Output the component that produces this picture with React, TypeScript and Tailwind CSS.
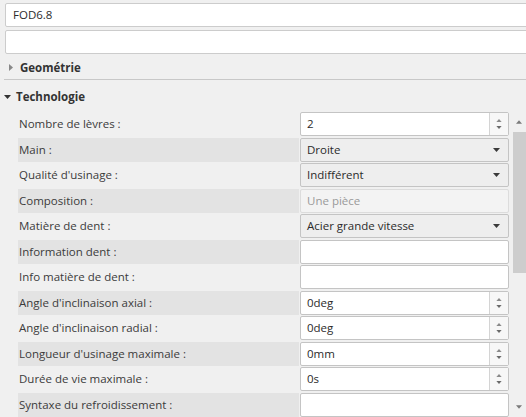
import React from "react";

type Row = {
  label: string;
  kind: "spin" | "combo" | "text" | "disabled";
  value?: string;
};

const ROWS: Row[] = [
  { label: "Nombre de lèvres :", kind: "spin", value: "2" },
  { label: "Main :", kind: "combo", value: "Droite" },
  { label: "Qualité d'usinage :", kind: "combo", value: "Indifférent" },
  { label: "Composition :", kind: "disabled", value: "Une pièce" },
  { label: "Matière de dent :", kind: "combo", value: "Acier grande vitesse" },
  { label: "Information dent :", kind: "text" },
  { label: "Info matière de dent :", kind: "text" },
  { label: "Angle d'inclinaison axial :", kind: "spin", value: "0deg" },
  { label: "Angle d'inclinaison radial :", kind: "spin", value: "0deg" },
  { label: "Longueur d'usinage maximale :", kind: "spin", value: "0mm" },
  { label: "Durée de vie maximale :", kind: "spin", value: "0s" },
  { label: "Syntaxe du refroidissement :", kind: "text" },
];

function Tri({ dir, className }: { dir: "up" | "down" | "right"; className: string }) {
  const pts =
    dir === "up" ? "0,4 3.5,0 7,4" : dir === "down" ? "0,0 7,0 3.5,4" : "0,0 4,3.5 0,7";
  const w = dir === "right" ? 4 : 7;
  const h = dir === "right" ? 7 : 4;
  return (
    <svg width={w} height={h} viewBox={`0 0 ${w} ${h}`} className={className}>
      <polygon points={pts} fill="currentColor" />
    </svg>
  );
}

function Field({ row }: { row: Row }) {
  if (row.kind === "combo") {
    return (
      <div className="flex h-[24px] items-center justify-between rounded-[2px] border border-[#c4c4c4] bg-[#eeeeee] pl-[6px] pr-[8px] text-[#2b2b2b]">
        <span>{row.value}</span>
        <Tri dir="down" className="text-[#3a3a3a]" />
      </div>
    );
  }
  if (row.kind === "disabled") {
    return (
      <div className="flex h-[24px] items-center rounded-[2px] border border-[#dcdcdc] bg-[#f3f3f3] pl-[6px] text-[#9a9a9a]">
        {row.value}
      </div>
    );
  }
  if (row.kind === "spin") {
    return (
      <div className="flex h-[24px] items-stretch rounded-[2px] border border-[#c4c4c4] bg-white text-[#2b2b2b]">
        <div className="flex flex-1 items-center pl-[6px]">{row.value}</div>
        <div className="flex w-[19px] flex-col items-center justify-center gap-[4px] border-l border-[#d4d4d4] bg-[#f7f7f7]">
          <Tri dir="up" className="h-[3px] w-[6px] text-[#8a8a8a]" />
          <Tri dir="down" className="h-[3px] w-[6px] text-[#6a6a6a]" />
        </div>
      </div>
    );
  }
  return <div className="h-[24px] rounded-[2px] border border-[#c4c4c4] bg-white" />;
}

export default function App() {
  return (
    <div
      className="h-[417px] w-[526px] overflow-hidden bg-[#f0f0f0] text-[11.5px] text-[#3b3b3b]"
      style={{ fontFamily: '"Open Sans", "Noto Sans", sans-serif' }}
    >
      {/* top inputs */}
      <div className="flex flex-col gap-[3px] pl-[5px] pt-[3px]">
        <div className="-mr-[4px] flex h-[24px] items-center rounded-[2px] border border-[#cccccc] bg-white pl-[7px] text-[#2b2b2b]">
          FOD6.8
        </div>
        <div className="-mr-[4px] h-[24px] rounded-[2px] border border-[#cccccc] bg-white" />
      </div>

      {/* Geometrie */}
      <div className="mt-[4px] flex h-[22px] items-center gap-[7px] border-b border-[#c8c8c8] pl-[5px] ml-[4px] pb-[2px]">
        <Tri dir="right" className="text-[#888888]" />
        <span className="font-bold text-[#333333]">Geométrie</span>
      </div>

      {/* Technologie */}
      <div className="mt-[6px] flex h-[22px] items-center gap-[5px] pl-[4px]">
        <Tri dir="down" className="text-[#333333]" />
        <span className="font-bold text-[#333333]">Technologie</span>
      </div>

      <div className="mt-[4px] flex">
        <div className="flex w-[509px] flex-col gap-[1.5px] pl-[18px]">
          {ROWS.map((r, i) => (
            <div key={r.label} className="flex h-[24px] items-stretch">
              <div
                className={`flex w-[281px] items-center pl-[1px] ${i % 2 === 1 ? "bg-[#e3e3e3]" : ""}`}
              >
                {r.label}
              </div>
              <div className="ml-[1px] flex-1">
                <Field row={r} />
              </div>
            </div>
          ))}
        </div>
        {/* scrollbar */}
        <div className="ml-[3px] flex w-[14px] flex-col items-center">
          <div className="flex h-[20px] items-center justify-center">
            <Tri dir="up" className="h-[4px] w-[6px] text-[#7a7a7a]" />
          </div>
          <div className="h-[141px] w-[13px] bg-[#cdcdcd]" />
          <div className="flex-1" />
          <div className="flex h-[20px] items-center justify-center">
            <Tri dir="down" className="h-[4px] w-[6px] text-[#7a7a7a]" />
          </div>
        </div>
      </div>
    </div>
  );
}
